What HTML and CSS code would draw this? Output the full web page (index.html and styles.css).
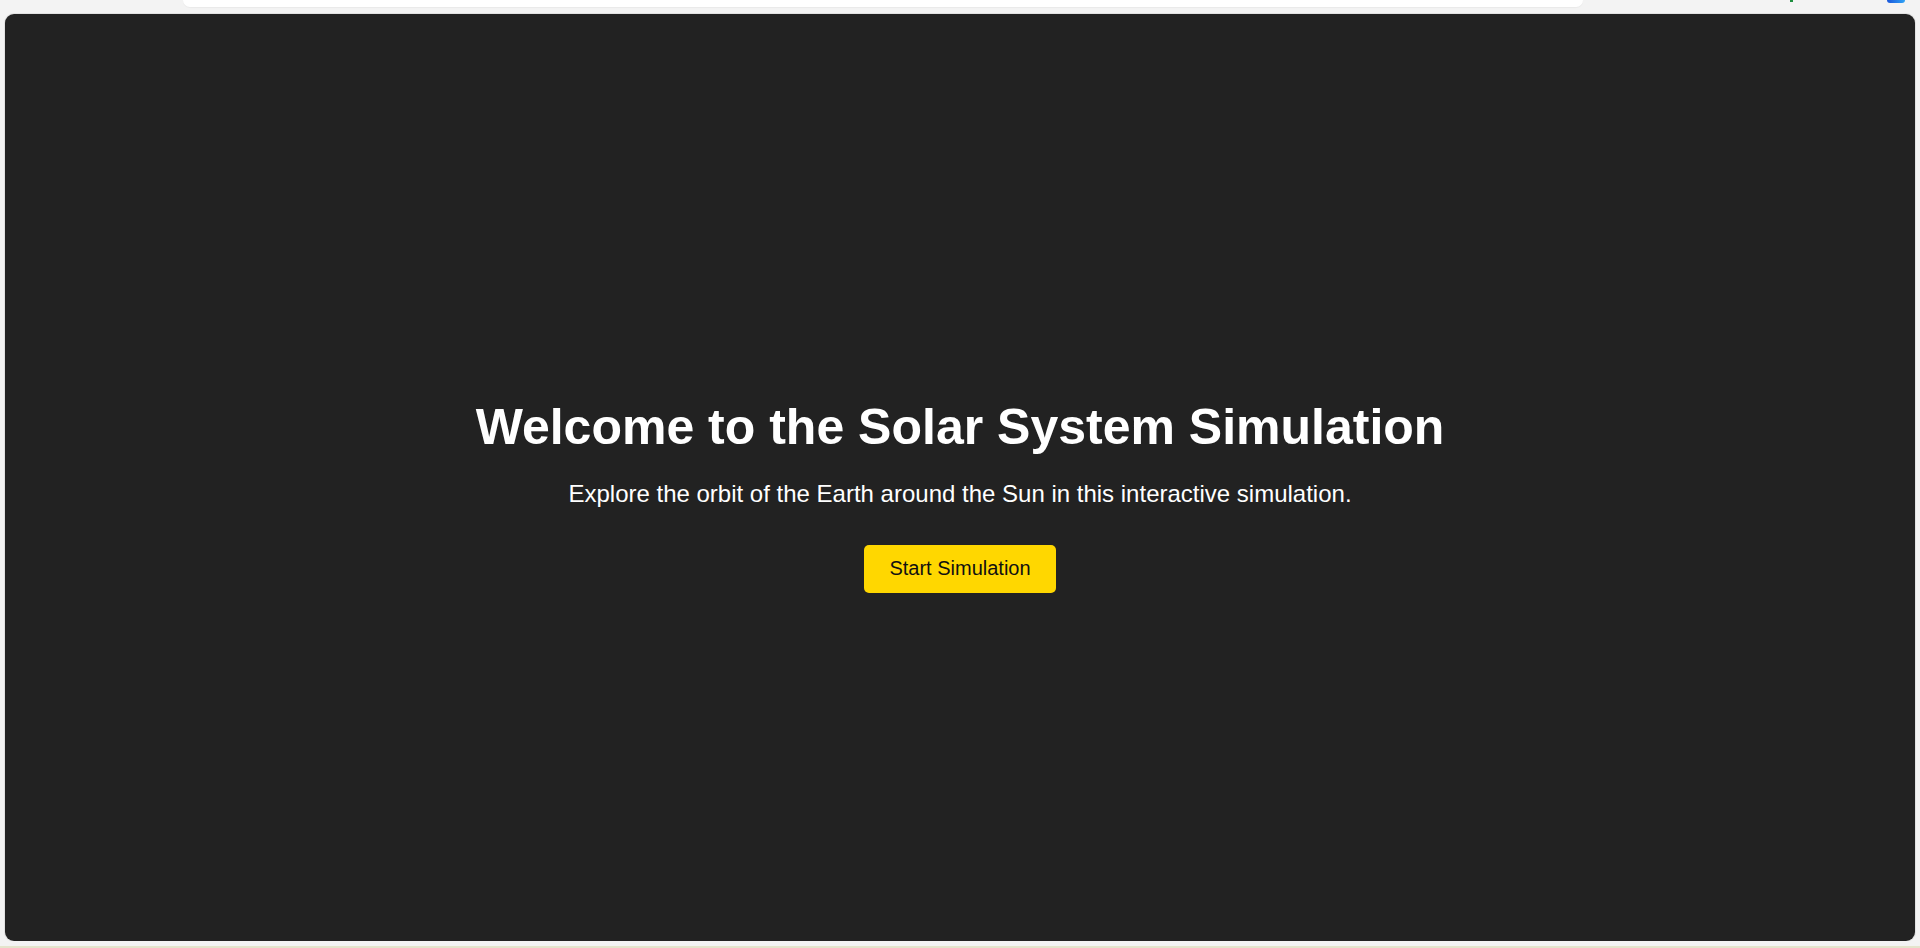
FILE: index.html
```html
<!DOCTYPE html>
<html lang="en">
<head>
<meta charset="utf-8">
<title>Solar System Simulation</title>
<link rel="stylesheet" href="styles.css">
</head>
<body>
<div class="topstrip">
  <div class="addressbar"></div>
  <div class="ext-green"></div>
  <div class="ext-blue"></div>
</div>
<main class="panel">
  <h1 class="title">Welcome to the Solar System Simulation</h1>
  <p class="subtitle">Explore the orbit of the Earth around the Sun in this interactive simulation.</p>
  <button class="start-btn" type="button">Start Simulation</button>
</main>
<div class="bottomstrip"></div>
</body>
</html>
```

FILE: styles.css
```css
html, body {
  margin: 0;
  padding: 0;
}
body {
  width: 1920px;
  height: 948px;
  overflow: hidden;
  background: #f3f3f3;
  display: flex;
  flex-direction: column;
  font-family: "Liberation Sans", Arial, sans-serif;
}
.topstrip {
  height: 14px;
  flex: none;
  display: flex;
  align-items: flex-start;
  position: relative;
}
.addressbar {
  margin-left: 183px;
  width: 1400px;
  height: 7px;
  background: #ffffff;
  border-radius: 0 0 12px 12px;
  box-shadow: 0 1px 1px rgba(0,0,0,0.04);
}
.ext-green {
  position: absolute;
  left: 1790px;
  top: 0;
  width: 3px;
  height: 2px;
  background: #1e8e3e;
}
.ext-blue {
  position: absolute;
  left: 1887px;
  top: 0;
  width: 18px;
  height: 3px;
  background: linear-gradient(90deg, #1a56db, #2fa3f5);
  border-radius: 0 0 5px 5px;
}
.panel {
  flex: none;
  height: 927px;
  margin: 0 5px;
  box-sizing: border-box;
  padding-top: 36px;
  background: #222222;
  border-radius: 9px;
  box-shadow: 0 0 0 1px #e2e2e2;
  display: flex;
  flex-direction: column;
  align-items: center;
  justify-content: center;
  color: #ffffff;
}
.title {
  margin: 0;
  font-size: 50px;
  line-height: 57px;
  font-weight: bold;
}
.subtitle {
  margin: 24px 0 0;
  font-size: 24px;
  line-height: 28px;
}
.start-btn {
  margin-top: 37px;
  width: 192px;
  height: 48px;
  border: none;
  border-radius: 5px;
  background: #ffd700;
  color: #111111;
  font-family: "Liberation Sans", Arial, sans-serif;
  font-size: 20px;
  padding: 0;
  cursor: pointer;
}
.bottomstrip {
  flex: 1;
  border-bottom: 2px solid #e4e4cc;
  background: #f3f3f3;
}
```
